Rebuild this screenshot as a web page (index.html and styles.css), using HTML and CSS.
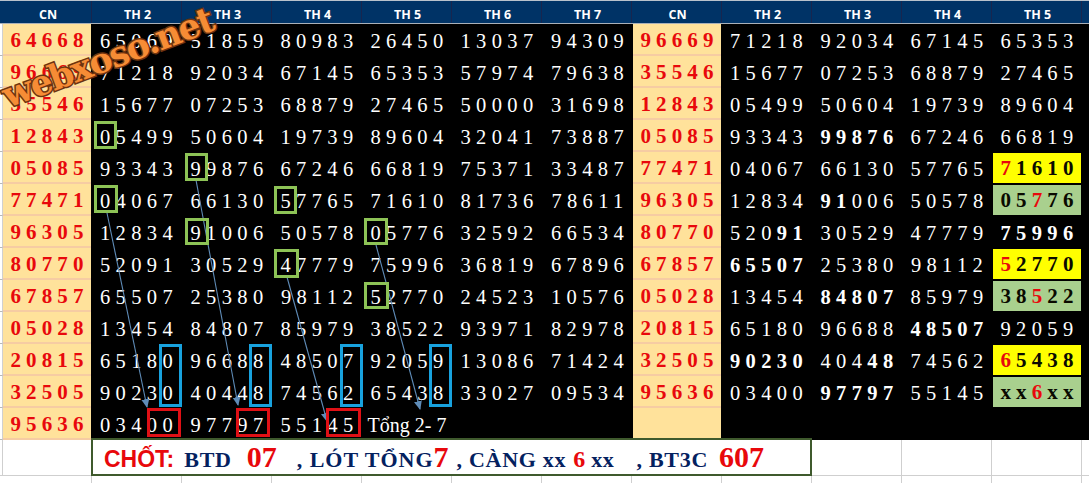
FILE: index.html
```html
<!DOCTYPE html>
<html lang="vi">
<head>
<meta charset="utf-8">
<title>Bảng kết quả</title>
<link rel="stylesheet" href="styles.css">
</head>
<body>
<main class="sheet">
  <div class="head">
    <div class="hc">CN</div><div class="hc">TH 2</div><div class="hc">TH 3</div><div class="hc">TH 4</div><div class="hc">TH 5</div><div class="hc">TH 6</div><div class="hc">TH 7</div><div class="hc">CN</div><div class="hc">TH 2</div><div class="hc">TH 3</div><div class="hc">TH 4</div><div class="hc">TH 5</div><div class="hc"></div>
  </div>

  <div class="row"><div class="c cn">64668</div><div class="c">65069</div><div class="c">51859</div><div class="c">80983</div><div class="c">26450</div><div class="c">13037</div><div class="c">94309</div><div class="c cn">96669</div><div class="c">71218</div><div class="c">92034</div><div class="c">67145</div><div class="c">65353</div></div>
  <div class="row"><div class="c cn">96669</div><div class="c">71218</div><div class="c">92034</div><div class="c">67145</div><div class="c">65353</div><div class="c">57974</div><div class="c">79638</div><div class="c cn">35546</div><div class="c">15677</div><div class="c">07253</div><div class="c">68879</div><div class="c">27465</div></div>
  <div class="row"><div class="c cn">35546</div><div class="c">15677</div><div class="c">07253</div><div class="c">68879</div><div class="c">27465</div><div class="c">50000</div><div class="c">31698</div><div class="c cn">12843</div><div class="c">05499</div><div class="c">50604</div><div class="c">19739</div><div class="c">89604</div></div>
  <div class="row"><div class="c cn">12843</div><div class="c">05499</div><div class="c">50604</div><div class="c">19739</div><div class="c">89604</div><div class="c">32041</div><div class="c">73887</div><div class="c cn">05085</div><div class="c">93343</div><div class="c"><b>99876</b></div><div class="c">67246</div><div class="c">66819</div></div>
  <div class="row"><div class="c cn">05085</div><div class="c">93343</div><div class="c">99876</div><div class="c">67246</div><div class="c">66819</div><div class="c">75371</div><div class="c">33487</div><div class="c cn">77471</div><div class="c">04067</div><div class="c">66130</div><div class="c">57765</div><div class="c hl yellow"><i>7</i>1610</div></div>
  <div class="row"><div class="c cn">77471</div><div class="c">04067</div><div class="c">66130</div><div class="c">57765</div><div class="c">71610</div><div class="c">81736</div><div class="c">78611</div><div class="c cn">96305</div><div class="c">12834</div><div class="c"><b>91</b>006</div><div class="c">50578</div><div class="c hl green">05<i>7</i>76</div></div>
  <div class="row"><div class="c cn">96305</div><div class="c">12834</div><div class="c">91006</div><div class="c">50578</div><div class="c">05776</div><div class="c">32592</div><div class="c">66534</div><div class="c cn">80770</div><div class="c">520<b>91</b></div><div class="c">30529</div><div class="c">47779</div><div class="c"><b>75996</b></div></div>
  <div class="row"><div class="c cn">80770</div><div class="c">52091</div><div class="c">30529</div><div class="c">47779</div><div class="c">75996</div><div class="c">36819</div><div class="c">67896</div><div class="c cn">67857</div><div class="c"><b>65507</b></div><div class="c">25380</div><div class="c">98112</div><div class="c hl yellow"><i>5</i>2770</div></div>
  <div class="row"><div class="c cn">67857</div><div class="c">65507</div><div class="c">25380</div><div class="c">98112</div><div class="c">52770</div><div class="c">24523</div><div class="c">10576</div><div class="c cn">05028</div><div class="c">13454</div><div class="c"><b>84807</b></div><div class="c">85979</div><div class="c hl green">38<i>5</i>22</div></div>
  <div class="row"><div class="c cn">05028</div><div class="c">13454</div><div class="c">84807</div><div class="c">85979</div><div class="c">38522</div><div class="c">93971</div><div class="c">82978</div><div class="c cn">20815</div><div class="c">65180</div><div class="c">96688</div><div class="c"><b>48507</b></div><div class="c">92059</div></div>
  <div class="row"><div class="c cn">20815</div><div class="c">65180</div><div class="c">96688</div><div class="c">48507</div><div class="c">92059</div><div class="c">13086</div><div class="c">71424</div><div class="c cn">32505</div><div class="c"><b>90230</b></div><div class="c">404<b>48</b></div><div class="c">74562</div><div class="c hl yellow"><i>6</i>5438</div></div>
  <div class="row"><div class="c cn">32505</div><div class="c">90230</div><div class="c">40448</div><div class="c">74562</div><div class="c">65438</div><div class="c">33027</div><div class="c">09534</div><div class="c cn">95636</div><div class="c">03400</div><div class="c"><b>97797</b></div><div class="c">55145</div><div class="c hl green">xx<i>6</i>xx</div></div>
  <div class="row"><div class="c cn">95636</div><div class="c">03400</div><div class="c">97797</div><div class="c">55145</div><div class="c note">Tổng 2- 7</div><div class="c"></div><div class="c"></div><div class="c cn"></div><div class="c"></div><div class="c"></div><div class="c"></div><div class="c"></div></div>

  <div class="foot">
    <div class="fc"></div>
    <div class="fc"></div>
    <div class="box">
      <span class="chot">CHỐT:</span>
      <span class="lbl btd">BTD</span>
      <span class="big v07">07</span>
      <span class="lbl lot">, LÓT TỔNG</span>
      <span class="big">7</span>
      <span class="lbl cang">, CÀNG xx</span>
      <span class="big six">6</span>
      <span class="lbl xx">xx</span>
      <span class="lbl bt3c">, BT3C</span>
      <span class="big v607">607</span>
    </div>
    <div class="fc"></div><div class="fc"></div><div class="fc"></div><div class="fc end"></div>
  </div>
  <div class="tail">
    <div></div><div></div><div></div><div></div><div></div><div></div><div></div><div></div><div></div><div></div><div></div><div></div><div></div>
  </div>

  <svg class="overlay" width="1089" height="483" viewBox="0 0 1089 483" aria-hidden="true">
    <defs>
      <marker id="tip" markerWidth="9" markerHeight="10" refX="8" refY="4" orient="auto" markerUnits="userSpaceOnUse">
        <path class="tip" d="M0 0 L9 4 L0 8 Z"/>
      </marker>
    </defs>
    <line class="arrow" x1="107" y1="213" x2="147" y2="407" marker-end="url(#tip)"/>
    <line class="arrow" x1="196" y1="180" x2="238" y2="405" marker-end="url(#tip)"/>
    <line class="arrow" x1="287" y1="277" x2="327" y2="421" marker-end="url(#tip)"/>
    <line class="arrow" x1="376" y1="245" x2="420" y2="409" marker-end="url(#tip)"/>

    <rect class="gbox" x="95.5" y="122.5" width="20" height="25"/>
    <rect class="gbox" x="186.5" y="154.5" width="20" height="25"/>
    <rect class="gbox" x="95.5" y="186.5" width="21" height="25"/>
    <rect class="gbox" x="275.5" y="187.5" width="20" height="25"/>
    <rect class="gbox" x="186.5" y="219.5" width="21" height="24"/>
    <rect class="gbox" x="365.5" y="219.5" width="21" height="24"/>
    <rect class="gbox" x="275.5" y="250.5" width="22" height="26"/>
    <rect class="gbox" x="365.5" y="283.5" width="22" height="24"/>

    <rect class="bbox" x="160.5" y="345.5" width="20" height="60"/>
    <rect class="bbox" x="250.5" y="345.5" width="20" height="60"/>
    <rect class="bbox" x="341.5" y="345.5" width="20" height="60"/>
    <rect class="bbox" x="430.5" y="345.5" width="20" height="60"/>

    <rect class="rbox" x="148.5" y="409.5" width="31" height="26"/>
    <rect class="rbox" x="237.5" y="409.5" width="31" height="26"/>
    <rect class="rbox" x="327.5" y="409.5" width="32" height="26"/>

    <path id="wm" class="wm-path" d="M8 108 Q112 70 250 16"/>
    <text class="wm"><textPath href="#wm">webxoso.net</textPath></text>
  </svg>
</main>
</body>
</html>
```
FILE: styles.css
```css
html, body {
  margin: 0;
  padding: 0;
  background: #fff;
}
body {
  width: 1089px;
  height: 483px;
  overflow: hidden;
}
.sheet {
  position: relative;
  width: 1089px;
  height: 483px;
  font-family: "Liberation Serif", "Times New Roman", serif;
}

/* header */
.head {
  display: grid;
  grid-template-columns: 92px repeat(11, 90px) 7px;
  height: 24px;
  margin-bottom: -1px;
  box-sizing: border-box;
  border-bottom: 1px solid #a9b0b8;
  border-top: 1px solid #b9c2cc;
  background: #003366;
}
.hc {
  display: flex;
  align-items: center;
  justify-content: center;
  padding-top: 7px;
  padding-left: 2px;
  border-right: 1px solid #17264f;
  box-sizing: border-box;
  color: #fff;
  font: 700 12.5px/1 "Open Sans", "Noto Sans", sans-serif;
}
.hc:first-child {
  padding-left: 5px;
}
.hc:last-child {
  border-right: 0;
}

/* number rows */
.head + .row {
  margin-top: 1px;
}
.row {
  display: grid;
  grid-template-columns: 3px 88px 91px repeat(4, 90px) 91px 88px 91px repeat(2, 90px) 90px 7px;
  height: 32px;
  background: #000;
}
.row::before {
  content: "";
  background: #fff;
  border-bottom: 1px solid #b8b8b8;
  border-right: 1px solid #d0d0d0;
  box-sizing: border-box;
}
.c {
  display: flex;
  align-items: center;
  justify-content: center;
  padding-top: 3px;
  padding-left: 5px;
  box-sizing: border-box;
  color: #fff;
  font-size: 20.5px;
  letter-spacing: 5.35px;
  white-space: pre;
}
.c b {
  font-weight: 700;
}
.cn {
  padding-top: 2px;
  background: #ffe29b;
  border-bottom: 2px solid #f6cca3;
  color: #e8080c;
  font-weight: 700;
  font-size: 21px;
  letter-spacing: 5.1px;
}
.note {
  letter-spacing: 0;
  padding-left: 0;
  font-size: 20px;
}
.hl {
  margin: 1px;
  padding-top: 1px;
  color: #0a0a00;
  font-weight: 700;
  font-size: 21px;
  letter-spacing: 5.1px;
}
.hl i {
  font-style: normal;
  color: #e8080c;
}
.yellow {
  background: #ffff00;
}
.green {
  background: #a9d08e;
}

/* bottom band */
.foot {
  display: grid;
  grid-template-columns: 3px 88px 721px 90px 90px 90px 7px;
  height: 36px;
}
.fc {
  border-bottom: 1px solid #cfcfcf;
  border-right: 1px solid #cfcfcf;
  box-sizing: border-box;
}
.fc:nth-child(2),
.fc.end {
  border-right: 0;
}
.box {
  position: relative;
  z-index: 1;
  display: flex;
  align-items: baseline;
  height: 38px;
  margin-top: -2px;
  padding-left: 11px;
  box-sizing: border-box;
  border: 2px solid #3f5a2d;
  background: #fff;
  white-space: pre;
  line-height: 33px;
}
.chot {
  color: #e8080c;
  font: 700 23px/33px "Liberation Sans", Arial, sans-serif;
}
.lbl {
  color: #04215f;
  font-weight: 700;
  font-size: 22px;
  letter-spacing: 0.7px;
}
.big {
  color: #e8080c;
  font-weight: 700;
  font-size: 30px;
}
.btd { margin-left: 10px; }
.v07 { margin-left: 15px; }
.lot { margin-left: 20px; letter-spacing: 1px; }
.cang { margin-left: 8px; }
.six { margin-left: 7px; font-size: 24px; }
.xx { margin-left: 6px; }
.bt3c { margin-left: 22px; }
.v607 { margin-left: 11px; }

.tail {
  display: grid;
  grid-template-columns: 92px repeat(11, 90px) 7px;
  height: 7px;
}
.tail div {
  border-right: 1px solid #cfcfcf;
  box-sizing: border-box;
}
.tail div:last-child {
  border-right: 0;
}

/* annotations on top of the sheet */
.overlay {
  position: absolute;
  left: 0;
  top: 0;
  pointer-events: none;
}
.gbox, .bbox, .rbox {
  fill: none;
  stroke-width: 3;
}
.gbox { stroke: #8dc356; }
.bbox { stroke: #18a2de; }
.rbox { stroke: #e01015; }
.arrow {
  stroke: #5f8cb8;
  stroke-width: 1.1;
}
.tip {
  fill: #5f8cb8;
}
.wm-path {
  fill: none;
}
.wm {
  font-family: "DejaVu Serif", serif;
  font-weight: 700;
  font-size: 35px;
  letter-spacing: -1.6px;
  fill: #f68c35;
  stroke: #6d3410;
  stroke-width: 3;
  paint-order: stroke;
}
```
